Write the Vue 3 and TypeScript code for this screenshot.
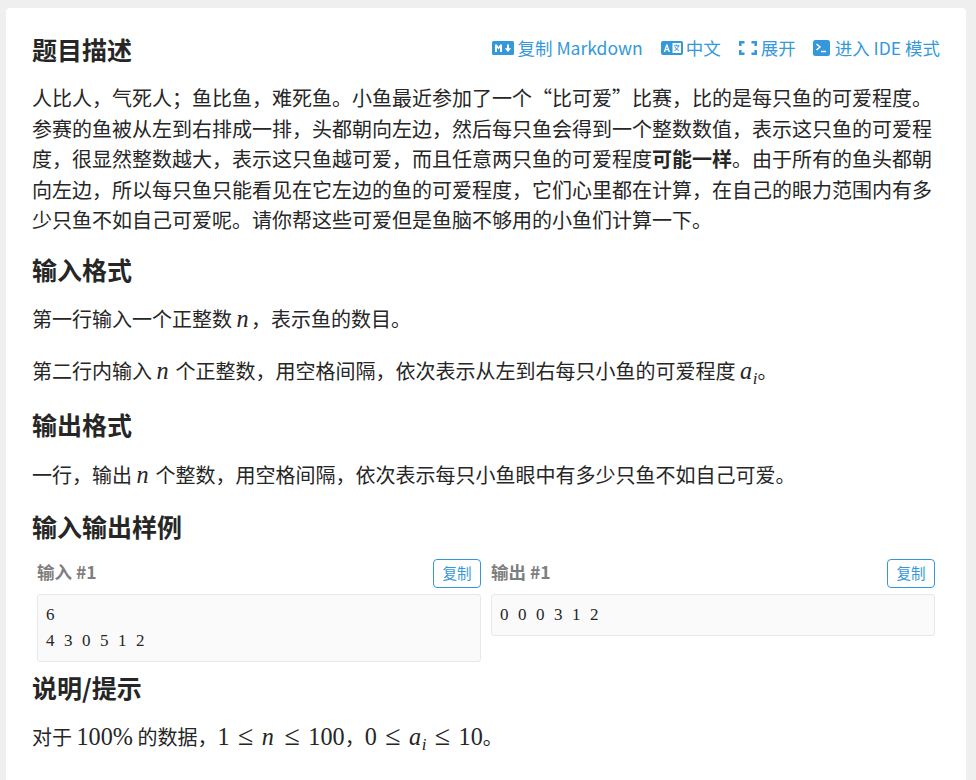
<script setup lang="ts">
const samples = [
  { label: '输入 #1', text: '6\n4 3 0 5 1 2' },
  { label: '输出 #1', text: '0 0 0 3 1 2' },
]
</script>

<template>
  <main class="card">
    <header class="head">
      <h2 class="title first">题目描述</h2>
      <nav class="tools">
        <a class="tool">
          <svg class="ic tight" width="22" height="14" viewBox="0 0 22 14">
            <rect width="22" height="14" rx="1.5" fill="#3498db" />
            <path d="M3 11V3.500h1.800l1.700 2.500 1.700-2.500H10V11H8V6.500L6.500 8.500 5 6.500V11zM15 3.500h2v3.700h2.200l-3.200 3.800-3.200-3.800H15z" fill="#fff" />
          </svg>
          <span>复制 Markdown</span>
        </a>
        <a class="tool">
          <svg class="ic tight" width="22" height="14" viewBox="0 0 22 14">
            <rect width="22" height="14" rx="2" fill="#3498db" />
            <rect x="11.500" y="2" width="8.500" height="10" fill="#fff" />
            <path d="M2.700 11L5.200 3.500h1.300l2.500 7.500H7.500L7 9.200H4.700L4.200 11zM5.100 8h1.500L5.850 5.500z" fill="#fff" />
            <path d="M13 4.800h5.500M15.700 3.500v1.300M17.500 4.800c-.5 2.500-2 3.900-4 4.800M14 6c.8 1.500 2.200 2.800 4 3.600" stroke="#3498db" stroke-width="1" fill="none" />
          </svg>
          <span>中文</span>
        </a>
        <a class="tool">
          <svg class="ic" width="18" height="14" viewBox="0 0 18 14">
            <path d="M1.300 5V1.300H5.500M12.500 1.300h4.200V5M16.700 9v3.700H12.500M5.500 12.700H1.300V9" stroke="#3498db" stroke-width="2.600" fill="none" />
          </svg>
          <span>展开</span>
        </a>
        <a class="tool last">
          <svg class="ic wide" width="17" height="16" viewBox="0 0 17 16">
            <rect width="17" height="16" rx="2.500" fill="#3498db" />
            <path d="M3.500 4l3.500 3-3.500 3" stroke="#fff" stroke-width="1.500" fill="none" />
            <path d="M8 11.500h5" stroke="#fff" stroke-width="1.500" />
          </svg>
          <span>进入 IDE 模式</span>
        </a>
      </nav>
    </header>

    <p class="para">人比人，气死人；鱼比鱼，难死鱼。小鱼最近参加了一个“比可爱”比赛，比的是每只鱼的可爱程度。参赛的鱼被从左到右排成一排，头都朝向左边，然后每只鱼会得到一个整数数值，表示这只鱼的可爱程度，很显然整数越大，表示这只鱼越可爱，而且任意两只鱼的可爱程度<strong>可能一样</strong>。由于所有的鱼头都朝向左边，所以每只鱼只能看见在它左边的鱼的可爱程度，它们心里都在计算，在自己的眼力范围内有多少只鱼不如自己可爱呢。请你帮这些可爱但是鱼脑不够用的小鱼们计算一下。</p>

    <h2 class="title near">输入格式</h2>
    <p class="para">第一行输入一个正整数 <i class="math"><span class="n">n</span></i>，表示鱼的数目。</p>
    <p class="para">第二行内输入 <i class="math"><span class="n">n</span></i> 个正整数，用空格间隔，依次表示从左到右每只小鱼的可爱程度 <i class="math"><span class="a">a</span><sub class="sub">i</sub></i>。</p>

    <h2 class="title far">输出格式</h2>
    <p class="para">一行，输出 <i class="math"><span class="n">n</span></i> 个整数，用空格间隔，依次表示每只小鱼眼中有多少只鱼不如自己可爱。</p>

    <h2 class="title tail">输入输出样例</h2>
    <section class="samples">
      <div v-for="s in samples" :key="s.label" class="sample">
        <div class="sample-head">
          <span class="label">{{ s.label }}</span>
          <button class="copy" type="button">复制</button>
        </div>
        <pre class="code">{{ s.text }}</pre>
      </div>
    </section>

    <h2 class="title hint">说明/提示</h2>
    <p class="para">对于 <span class="math up">100%</span> 的数据，<span class="math up">1<span class="rel">≤</span><i class="n">n</i><span class="rel">≤</span>100</span>，<span class="math up">0<span class="rel">≤</span><i class="a">a</i><sub class="sub ital">i</sub><span class="rel">≤</span>10</span>。</p>
  </main>
</template>

<style>
html, body { margin: 0; background: #efefef; overflow: hidden; }
</style>

<style scoped>
.card {
  margin: 8px 10px 0 6px;
  padding: 20px 26px 30px;
  height: 900px;
  box-sizing: border-box;
  background: #fff;
  border-radius: 4px;
  color: #262626;
  font-family: "Noto Sans CJK SC", "Noto Sans", sans-serif;
  font-size: 20px;
  line-height: 30.600px;
}
.head { display: flex; justify-content: space-between; align-items: flex-start; margin-bottom: 11px; }
.title { margin: 0 0 12.500px; padding-top: 12px; font-size: 25px; line-height: 46px; font-weight: 700; }
.title.first { padding-top: 0; margin: -2px 0 0; }
.title.near { padding-top: 10px; }
.title.far { padding-top: 14px; margin-bottom: 13.500px; }
.title.tail { margin-bottom: 0; }
.title.hint { padding-top: 2px; }
.tools { display: flex; gap: 18px; color: #3498db; font-size: 17.500px; line-height: 24px; padding-top: 8px; }
.tool { display: inline-flex; align-items: center; gap: 4px; }
.tool.last { margin-left: -1px; }
.ic { flex: none; }
.ic.tight { margin-right: -1px; }
.ic.wide { margin-right: 1px; }
.para { margin: 0 0 21px; }
.para:has(+ .title) { margin-bottom: 0; }
.math { font-family: "Liberation Serif", serif; font-size: 24.200px; font-style: italic; line-height: 0; }
.math.up { font-style: normal; }
.n { display: inline-block; width: .6em; font-style: italic; }
.a { display: inline-block; width: .529em; font-style: italic; }
.rel { display: inline-block; width: 18.800px; margin: 0 6.700px; font-size: 28px; text-align: center; font-style: normal; }
.sub { font-size: 17px; line-height: 0; vertical-align: -5px; }
.sub.ital { font-style: italic; }
.samples { display: grid; grid-template-columns: 444px 444px; gap: 10px; padding-left: 5px; align-items: start; }
.sample-head { display: flex; justify-content: space-between; align-items: center; height: 29px; margin: 10px 0 6px; }
.label { color: #7f7f7f; font-size: 17.500px; font-weight: 700; line-height: 24px; margin-top: -3px; }
.copy {
  width: 48px;
  height: 29px;
  padding: 0;
  border: 1px solid #3498db;
  border-radius: 4px;
  background: #fff;
  color: #3498db;
  font-family: inherit;
  font-size: 14.500px;
  line-height: 1;
}
.code {
  margin: 0;
  padding: 7px 8px;
  border: 1px solid #e8e8e8;
  border-radius: 3px;
  background: #fafafa;
  color: #262626;
  font-family: "Liberation Serif", serif;
  font-size: 17px;
  letter-spacing: 2.625px;
  line-height: 26px;
}
</style>
